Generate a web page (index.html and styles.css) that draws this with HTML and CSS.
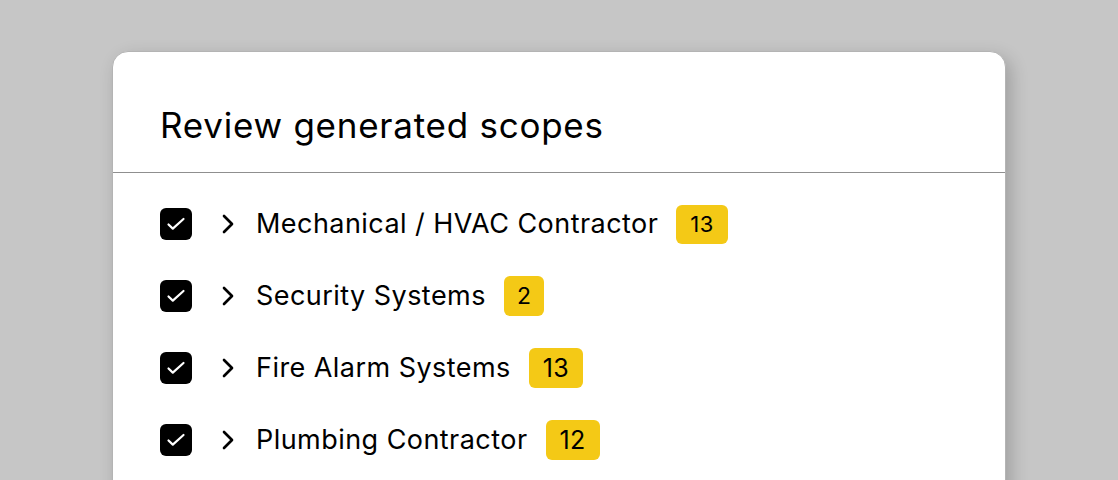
FILE: index.html
```html
<!DOCTYPE html>
<html lang="en">
<head>
<meta charset="utf-8">
<title>Review generated scopes</title>
<link rel="stylesheet" href="styles.css">
</head>
<body>
<div class="card">
  <div class="card-header">
    <h1 class="title">Review generated scopes</h1>
  </div>
  <ul class="scope-list">
    <li class="scope-row">
      <span class="checkbox"><svg viewBox="0 0 32 32" width="32" height="32"><path d="M8.5 16.5 12.8 20.6 23.5 11" fill="none" stroke="#fff" stroke-width="2.2" stroke-linecap="round" stroke-linejoin="round"/></svg></span>
      <svg class="chevron" viewBox="0 0 24 24" width="32" height="32"><path d="m9 18 6-6-6-6" fill="none" stroke="#000" stroke-width="2" stroke-linecap="round" stroke-linejoin="round"/></svg>
      <span class="scope-name">Mechanical / HVAC Contractor</span>
      <span class="badge badge-sm">13</span>
    </li>
    <li class="scope-row">
      <span class="checkbox"><svg viewBox="0 0 32 32" width="32" height="32"><path d="M8.5 16.5 12.8 20.6 23.5 11" fill="none" stroke="#fff" stroke-width="2.2" stroke-linecap="round" stroke-linejoin="round"/></svg></span>
      <svg class="chevron" viewBox="0 0 24 24" width="32" height="32"><path d="m9 18 6-6-6-6" fill="none" stroke="#000" stroke-width="2" stroke-linecap="round" stroke-linejoin="round"/></svg>
      <span class="scope-name">Security Systems</span>
      <span class="badge badge-md">2</span>
    </li>
    <li class="scope-row">
      <span class="checkbox"><svg viewBox="0 0 32 32" width="32" height="32"><path d="M8.5 16.5 12.8 20.6 23.5 11" fill="none" stroke="#fff" stroke-width="2.2" stroke-linecap="round" stroke-linejoin="round"/></svg></span>
      <svg class="chevron" viewBox="0 0 24 24" width="32" height="32"><path d="m9 18 6-6-6-6" fill="none" stroke="#000" stroke-width="2" stroke-linecap="round" stroke-linejoin="round"/></svg>
      <span class="scope-name">Fire Alarm Systems</span>
      <span class="badge badge-lg">13</span>
    </li>
    <li class="scope-row">
      <span class="checkbox"><svg viewBox="0 0 32 32" width="32" height="32"><path d="M8.5 16.5 12.8 20.6 23.5 11" fill="none" stroke="#fff" stroke-width="2.2" stroke-linecap="round" stroke-linejoin="round"/></svg></span>
      <svg class="chevron" viewBox="0 0 24 24" width="32" height="32"><path d="m9 18 6-6-6-6" fill="none" stroke="#000" stroke-width="2" stroke-linecap="round" stroke-linejoin="round"/></svg>
      <span class="scope-name">Plumbing Contractor</span>
      <span class="badge badge-lg">12</span>
    </li>
  </ul>
</div>
</body>
</html>
```
FILE: styles.css
```css
* { box-sizing: border-box; }
html, body { margin: 0; padding: 0; }
body {
  background: #c6c6c6;
  font-family: Inter, "Noto Sans", sans-serif;
  color: #000;
  padding-top: 51px;
  overflow: hidden;
  height: 480px;
}
.card {
  margin-left: 112px;
  width: 894px;
  background: #fff;
  border: 1px solid #b4b4b4;
  border-radius: 16px;
  box-shadow: 5px 6px 18px rgba(0,0,0,0.2);
  min-height: 600px;
}
.card-header {
  padding: 50px 47px 24px;
  border-bottom: 1px solid #8f8f8f;
}
.title {
  margin: 0;
  font-size: 35px;
  font-weight: 400;
  line-height: 46px;
  letter-spacing: 0.75px;
}
.scope-list {
  list-style: none;
  margin: 0;
  padding: 15px 0 0 47px;
}
.scope-row {
  display: flex;
  align-items: center;
  height: 72px;
}
.checkbox {
  width: 32px;
  height: 32px;
  border-radius: 6px;
  background: #000;
  display: flex;
  flex: none;
}
.chevron {
  margin-left: 20px;
  flex: none;
}
.scope-name {
  margin-left: 12px;
  font-size: 27px;
  line-height: 32px;
  letter-spacing: 0.45px;
}
.badge {
  margin-left: 18px;
  background: #f4c916;
  border-radius: 6px;
  height: 40px;
  display: flex;
  align-items: center;
  justify-content: center;
  padding: 0 13px;
  letter-spacing: 0.4px;
}
.badge-sm { font-size: 22px; height: 39px; padding: 0 14px; }
.badge-md { font-size: 23px; }
.badge-lg { font-size: 25px; padding: 0 14px; }
```
